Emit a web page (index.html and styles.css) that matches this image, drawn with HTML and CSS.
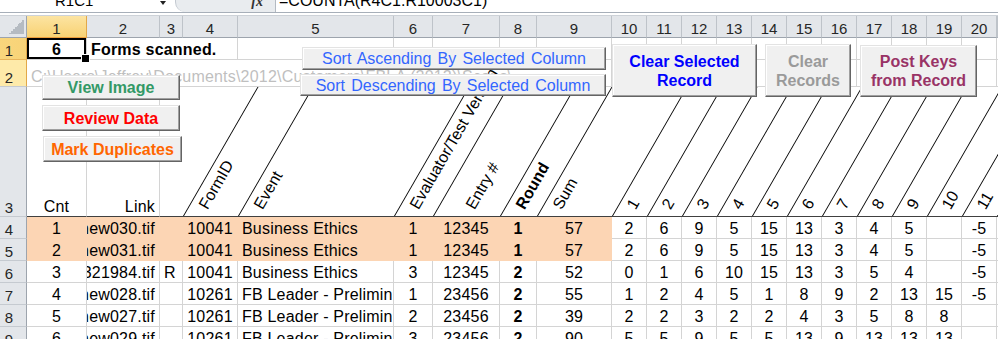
FILE: index.html
```html
<!DOCTYPE html>
<html lang="en">
<head>
    <meta charset="UTF-8">
    <meta name="viewport" content="width=device-width, initial-scale=1.0">
    <title>Scanned Forms</title>
    <link rel="stylesheet" href="styles.css">
</head>
<body>

<div class="app">

    <!-- Formula bar -->
    <div class="fbar">
        <div class="namebox"><span class="ref">R1C1</span><span class="drop"></span></div>
        <div class="fx"><span>fx</span></div>
        <div class="formula"><span>=COUNTA(R4C1:R10003C1)</span></div>
    </div>

    <!-- Sheet -->
    <div class="sheet">
        <div class="row head">
            <div class="corner"></div>
            <div class="hd sel">1</div>
            <div class="hd">2</div>
            <div class="hd">3</div>
            <div class="hd">4</div>
            <div class="hd">5</div>
            <div class="hd">6</div>
            <div class="hd">7</div>
            <div class="hd">8</div>
            <div class="hd">9</div>
            <div class="hd">10</div>
            <div class="hd">11</div>
            <div class="hd">12</div>
            <div class="hd">13</div>
            <div class="hd">14</div>
            <div class="hd">15</div>
            <div class="hd">16</div>
            <div class="hd">17</div>
            <div class="hd">18</div>
            <div class="hd">19</div>
            <div class="hd">20</div>
            <div class="hd"></div>
        </div>

        <div class="row r1">
            <div class="rh sel">1</div>
            <div class="c b cur">6</div>
            <div class="c b l span3">Forms scanned.</div>
            <div class="c"></div><div class="c"></div><div class="c"></div><div class="c"></div>
            <div class="c"></div><div class="c"></div><div class="c"></div><div class="c"></div>
            <div class="c"></div><div class="c"></div><div class="c"></div><div class="c"></div>
            <div class="c"></div><div class="c"></div><div class="c"></div><div class="c"></div>
            <div class="c"></div>
        </div>

        <div class="row r2">
            <div class="rh hov">2</div>
            <div class="c l path span9">C:\Users\Jeffrey\Documents\2012\Customers\FBLA (2012)\Scans\</div>
            <div class="c"></div><div class="c"></div><div class="c"></div><div class="c"></div>
            <div class="c"></div><div class="c"></div><div class="c"></div><div class="c"></div>
            <div class="c"></div><div class="c"></div><div class="c"></div><div class="c"></div>
        </div>

        <!-- Column titles, slanted -->
        <div class="row r3">
            <div class="rh">3</div>
            <div class="c">Cnt</div>
            <div class="c r">Link</div>
            <div class="c nob"></div>
            <div class="sl"><i></i><span>FormID</span></div>
            <div class="sl"><i></i><span>Event</span></div>
            <div class="sl"><i></i><span>Evaluator/Test Version</span></div>
            <div class="sl"><i></i><span class="wide">Entry #</span></div>
            <div class="sl"><i></i><span class="b">Round</span></div>
            <div class="sl"><i></i><span>Sum</span></div>
            <div class="sl"><i></i><span class="num">1</span></div>
            <div class="sl"><i></i><span class="num">2</span></div>
            <div class="sl"><i></i><span class="num">3</span></div>
            <div class="sl"><i></i><span class="num">4</span></div>
            <div class="sl"><i></i><span class="num">5</span></div>
            <div class="sl"><i></i><span class="num">6</span></div>
            <div class="sl"><i></i><span class="num">7</span></div>
            <div class="sl"><i></i><span class="num">8</span></div>
            <div class="sl"><i></i><span class="num">9</span></div>
            <div class="sl"><i></i><span class="num">10</span></div>
            <div class="sl"><i></i><span class="num">11</span></div>
            <div class="sl"><i></i></div>
        </div>

        <div class="row">
            <div class="rh">4</div>
            <div class="c hl">1</div>
            <div class="c hl r">new030.tif</div>
            <div class="c hl"></div>
            <div class="c hl">10041</div>
            <div class="c hl l">Business Ethics</div>
            <div class="c hl">1</div>
            <div class="c hl">12345</div>
            <div class="c hl b">1</div>
            <div class="c hl">57</div>
            <div class="c">2</div><div class="c">6</div><div class="c">9</div><div class="c">5</div>
            <div class="c">15</div><div class="c">13</div><div class="c">3</div><div class="c">4</div>
            <div class="c">5</div><div class="c"></div><div class="c">-5</div><div class="c"></div>
        </div>

        <div class="row">
            <div class="rh">5</div>
            <div class="c hl">2</div>
            <div class="c hl r">new031.tif</div>
            <div class="c hl"></div>
            <div class="c hl">10041</div>
            <div class="c hl l">Business Ethics</div>
            <div class="c hl">1</div>
            <div class="c hl">12345</div>
            <div class="c hl b">1</div>
            <div class="c hl">57</div>
            <div class="c">2</div><div class="c">6</div><div class="c">9</div><div class="c">5</div>
            <div class="c">15</div><div class="c">13</div><div class="c">3</div><div class="c">4</div>
            <div class="c">5</div><div class="c"></div><div class="c">-5</div><div class="c"></div>
        </div>

        <div class="row">
            <div class="rh">6</div>
            <div class="c">3</div>
            <div class="c r">0321984.tif</div>
            <div class="c l">R</div>
            <div class="c">10041</div>
            <div class="c l">Business Ethics</div>
            <div class="c">3</div>
            <div class="c">12345</div>
            <div class="c b">2</div>
            <div class="c">52</div>
            <div class="c">0</div><div class="c">1</div><div class="c">6</div><div class="c">10</div>
            <div class="c">15</div><div class="c">13</div><div class="c">3</div><div class="c">5</div>
            <div class="c">4</div><div class="c"></div><div class="c">-5</div><div class="c"></div>
        </div>

        <div class="row">
            <div class="rh">7</div>
            <div class="c">4</div>
            <div class="c r">new028.tif</div>
            <div class="c"></div>
            <div class="c">10261</div>
            <div class="c l">FB Leader - Prelimin</div>
            <div class="c">1</div>
            <div class="c">23456</div>
            <div class="c b">2</div>
            <div class="c">55</div>
            <div class="c">1</div><div class="c">2</div><div class="c">4</div><div class="c">5</div>
            <div class="c">1</div><div class="c">8</div><div class="c">9</div><div class="c">2</div>
            <div class="c">13</div><div class="c">15</div><div class="c">-5</div><div class="c"></div>
        </div>

        <div class="row">
            <div class="rh">8</div>
            <div class="c">5</div>
            <div class="c r">new027.tif</div>
            <div class="c"></div>
            <div class="c">10261</div>
            <div class="c l">FB Leader - Prelimin</div>
            <div class="c">2</div>
            <div class="c">23456</div>
            <div class="c b">2</div>
            <div class="c">39</div>
            <div class="c">2</div><div class="c">2</div><div class="c">3</div><div class="c">2</div>
            <div class="c">2</div><div class="c">4</div><div class="c">3</div><div class="c">5</div>
            <div class="c">8</div><div class="c">8</div><div class="c"></div><div class="c"></div>
        </div>

        <div class="row">
            <div class="rh">9</div>
            <div class="c">6</div>
            <div class="c r">new029.tif</div>
            <div class="c"></div>
            <div class="c">10261</div>
            <div class="c l">FB Leader - Prelimin</div>
            <div class="c">3</div>
            <div class="c">23456</div>
            <div class="c b">2</div>
            <div class="c">90</div>
            <div class="c">5</div><div class="c">5</div><div class="c">9</div><div class="c">5</div>
            <div class="c">5</div><div class="c">13</div><div class="c">9</div><div class="c">13</div>
            <div class="c">13</div><div class="c">13</div><div class="c"></div><div class="c"></div>
        </div>
    </div>

    <!-- Macro buttons lying over the sheet -->
    <button class="btn view">View Image</button>
    <button class="btn review">Review Data</button>
    <button class="btn dup">Mark Duplicates</button>
    <button class="btn plain sort-asc">Sort Ascending By Selected Column</button>
    <button class="btn plain sort-desc">Sort Descending By Selected Column</button>
    <button class="btn clear-sel">Clear Selected<br>Record</button>
    <button class="btn clear-all">Clear<br>Records</button>
    <button class="btn post">Post Keys<br>from Record</button>

</div>

</body>
</html>
```

FILE: styles.css
```css
* {
    box-sizing: border-box;
}
body {
    margin: 0;
    font-family: "Liberation Sans", Arial, sans-serif;
    background-color: #fff;
    color: #000;
    overflow: hidden;
}
.app {
    position: relative;
    width: 998px;
    height: 339px;
    overflow: hidden;
}

/* Formula bar */
.fbar {
    display: flex;
    height: 13px;
    border-bottom: 1px solid #a7afb9;
    font-size: 16px;
    line-height: 16px;
    overflow: hidden;
}
.namebox {
    width: 175px;
    display: flex;
    align-items: flex-start;
    padding-left: 55px;
    font-size: 15px;
}
.ref {
    margin-top: -7px;
}
.drop {
    width: 0;
    height: 0;
    margin: 1px 9px 0 auto;
    border-left: 3px solid transparent;
    border-right: 3px solid transparent;
    border-top: 4px solid #222;
}
.fx {
    width: 101px;
    display: flex;
    justify-content: flex-end;
    padding-right: 12px;
    background-color: #e9ecef;
    border-left: 1px solid #c3c9d0;
    border-right: 1px solid #b4bac2;
    border-bottom-left-radius: 10px;
    font-family: "Liberation Serif", serif;
    font-style: italic;
    font-weight: bold;
    font-size: 14px;
    color: #333;
}
.fx span {
    margin-top: -6px;
}
.formula {
    flex: 1;
    padding-left: 3px;
}
.formula span {
    display: block;
    margin-top: -7px;
}

/* Grid */
.sheet {
    margin-top: 2px;
    border-top: 1px solid #cdd2d8;
    width: 998px;
}
.row {
    display: grid;
    grid-template-columns: 27px 60px 73px 23px 55px 156px 39px 67px 37px 75px repeat(11, 35px) minmax(0, 1fr);
    height: 22px;
}
.r2 {
    height: 27px;
}
.r3 {
    height: 130px;
}

.corner {
    background: #e3e6ea linear-gradient(to top left, #b5bbc2 50%, transparent 50%) no-repeat right 2px bottom 3px / 15px 15px;
    border-right: 1px solid #9da4ad;
    border-bottom: 1px solid #9da4ad;
}
.hd {
    display: flex;
    justify-content: center;
    align-items: flex-end;
    background-color: #e3e6ea;
    border-right: 1px solid #bec3c9;
    border-bottom: 1px solid #9da4ad;
    font-size: 15px;
    line-height: 17px;
    color: #262626;
}
.hd.sel {
    background: linear-gradient(#fce4a2, #f8d274);
    border-right-color: #e2a849;
    border-bottom-color: #ee9e3c;
}
.rh {
    display: flex;
    justify-content: center;
    align-items: flex-end;
    padding-right: 8px;
    background-color: #e3e6ea;
    border-right: 1px solid #9da4ad;
    border-bottom: 1px solid #c5cad0;
    font-size: 15px;
    line-height: 17px;
    color: #262626;
}
.rh.sel {
    background: linear-gradient(90deg, #f9d67c, #f8d378);
    border-right-color: #e2a849;
    border-bottom-color: #e8b45a;
}
.rh.hov {
    background-color: #feeaa9;
    border-right-color: #e2a849;
}

.c {
    display: flex;
    justify-content: center;
    align-items: flex-end;
    padding: 0 4px;
    border-right: 1px solid #d4d4d4;
    border-bottom: 1px solid #d4d4d4;
    font-size: 16px;
    line-height: 18px;
    letter-spacing: 0.2px;
    white-space: nowrap;
    overflow: hidden;
}
.c.l {
    justify-content: flex-start;
}
.c.r {
    justify-content: flex-end;
}
.b {
    font-weight: bold;
}
.hl {
    background-color: #fcd5b4;
    border-color: #fcd5b4;
}
.span3 {
    grid-column: span 3;
}
.span9 {
    grid-column: span 9;
}
.path {
    color: #bfbfbf;
}
.cur {
    position: relative;
    overflow: visible;
    box-shadow: inset 0 0 0 2px #000;
}
.cur::after {
    content: '';
    position: absolute;
    right: -4px;
    bottom: -4px;
    width: 7px;
    height: 7px;
    background-color: #000;
    border: 1px solid #fff;
}

/* Row 3: slanted headings */
.r3 .c {
    border-bottom-color: #404040;
}
.r3 .nob {
    border-right: 0;
}
.sl {
    display: flex;
    align-items: flex-end;
    border-bottom: 1px solid #404040;
    font-size: 16px;
    white-space: nowrap;
}
.sl i {
    flex: none;
    align-self: stretch;
    border-left: 1px solid #000;
    transform: skewX(-30deg);
    transform-origin: 0 100%;
}
.sl span {
    flex: none;
    margin: 0 0 4px 26px;
    line-height: 16px;
    transform: rotate(-60deg);
    transform-origin: 0 100%;
}
.sl .wide {
    margin-left: 43px;
}
.sl .num {
    margin-left: 25px;
}

/* Buttons */
.btn {
    position: absolute;
    display: flex;
    flex-direction: column;
    align-items: center;
    justify-content: center;
    padding: 0;
    background-color: #f0f0f0;
    border: 1px solid;
    border-color: #e3e3e3 #646464 #646464 #e3e3e3;
    box-shadow: inset -1px -1px 0 #a0a0a0, inset 1px 1px 0 #fff;
    font-family: inherit;
    font-size: 16px;
    font-weight: bold;
    line-height: 19px;
    text-align: center;
    white-space: nowrap;
}
.btn.plain {
    font-weight: normal;
    color: #3366ff;
    word-spacing: 1.75px;
}
.view {
    left: 42px;
    top: 75px;
    width: 138px;
    height: 25px;
    color: #339966;
}
.review {
    left: 42px;
    top: 105px;
    width: 138px;
    height: 26px;
    color: #ff0000;
}
.dup {
    left: 43px;
    top: 136px;
    width: 139px;
    height: 26px;
    color: #ff6600;
}
.sort-asc {
    left: 302px;
    top: 47px;
    width: 304px;
    height: 23px;
}
.sort-desc {
    left: 300px;
    top: 74px;
    width: 306px;
    height: 22px;
}
.clear-sel {
    left: 612px;
    top: 44px;
    width: 145px;
    height: 53px;
    color: #0000ff;
}
.clear-all {
    left: 765px;
    top: 44px;
    width: 86px;
    height: 53px;
    color: #9a9a9a;
}
.post {
    left: 860px;
    top: 45px;
    width: 117px;
    height: 52px;
    color: #993366;
}
```
